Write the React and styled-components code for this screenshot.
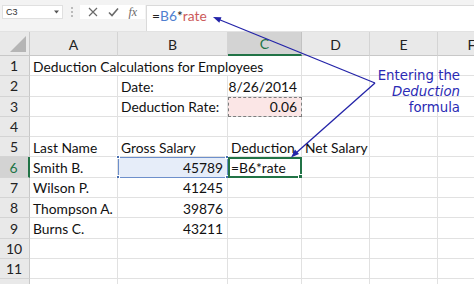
import React from 'react';
import styled, { createGlobalStyle, css } from 'styled-components';

const Global = createGlobalStyle`
  html, body { margin: 0; padding: 0; background: #fff; overflow: hidden; }
  body { width: 474px; height: 284px; }
`;

const Page = styled.div`
  position: relative;
  width: 474px;
  height: 284px;
  overflow: hidden;
  background: #fff;
  font-family: Lato, "Open Sans", sans-serif;
`;

const TopBar = styled.div`
  display: flex;
  align-items: flex-start;
  height: 32px;
  box-sizing: border-box;
  padding: 5px 0 0 2px;
  background: #f3f3f3;
  border-bottom: 1px solid #e2e2e2;
`;

const NameBox = styled.div`
  width: 61px;
  height: 14px;
  box-sizing: border-box;
  background: #fff;
  border: 1px solid #e0e0e0;
  display: flex;
  align-items: center;
  justify-content: space-between;
  padding: 0 3px 0 3px;
  font: 9px "Liberation Sans", Arial, sans-serif;
  color: #333;
`;

const Grip = styled.div`
  width: 17px;
  height: 14px;
  display: flex;
  flex-direction: column;
  align-items: center;
  justify-content: center;
  gap: 2px;
`;

const Dot = styled.span`
  width: 2px;
  height: 2px;
  border-radius: 50%;
  background: #a8a8a8;
`;

const FxButtons = styled.div`
  width: 65px;
  height: 14px;
  background: #fff;
  display: flex;
  align-items: center;
  justify-content: space-around;
  padding: 0 3px;
  box-sizing: border-box;
  color: #6a6a6a;
`;

const FxText = styled.span`
  font: italic 12px "Liberation Serif", serif;
  color: #6a6a6a;
  line-height: 14px;
`;

const FormulaBox = styled.div`
  flex: 1;
  height: 26px;
  margin-left: 1px;
  background: #fff;
  box-sizing: border-box;
  border-left: 1px solid #dadada;
  border-top: 1px solid #dadada;
  padding-left: 5px;
  font-size: 13.8px;
  line-height: 19px;
  color: #222;
  white-space: nowrap;
`;

const Ref = styled.span`
  color: ${p => p.$c};
`;

const Sheet = styled.div`
  display: grid;
  grid-template-columns: 30px 88px 110px 74px 68px 68px 68px;
  grid-template-rows: 24px repeat(12, 20.3px);
`;

const Corner = styled.div`
  background: #e9e9e9;
  border-right: 1px solid #c8c8c8;
  border-bottom: 1px solid #c8c8c8;
  box-sizing: border-box;
  position: relative;
`;

const CornerTri = styled.div`
  position: absolute;
  right: 3px;
  bottom: 3px;
  width: 0;
  height: 0;
  border-left: 16px solid transparent;
  border-bottom: 16px solid #b5b5b5;
`;

const ColHead = styled.div`
  display: flex;
  align-items: center;
  justify-content: center;
  box-sizing: border-box;
  background: ${p => (p.$sel ? '#d3d3d3' : '#e9e9e9')};
  color: ${p => (p.$sel ? '#217346' : '#222')};
  border-right: 1px solid ${p => (p.$sel ? '#c2c2c2' : '#d4d4d4')};
  border-bottom: ${p => (p.$sel ? '2px solid #217346' : '1px solid #c8c8c8')};
  font-size: 14px;
  padding-top: 1px;
`;

const RowHead = styled.div`
  display: flex;
  align-items: center;
  justify-content: center;
  box-sizing: border-box;
  background: ${p => (p.$sel ? '#d3d3d3' : '#e9e9e9')};
  color: ${p => (p.$sel ? '#217346' : '#222')};
  border-right: ${p => (p.$sel ? '2px solid #217346' : '1px solid #c8c8c8')};
  border-bottom: 1px solid #d4d4d4;
  font-size: 14px;
  padding-right: 1px;
`;

const variants = {
  ref: css`
    background: #fbe6e6;
    outline: 1px dashed #7d7d7d;
    outline-offset: -1px;
  `,
  range: css`
    background: #e6edf9;
    outline: 1px solid #6d8fcb;
    outline-offset: -1px;
  `,
  active: css`
    outline: 2px solid #217346;
    outline-offset: -2px;
  `,
};

const Cell = styled.div`
  position: relative;
  grid-column: span ${p => p.$span || 1};
  display: flex;
  align-items: center;
  justify-content: ${p => (p.$right ? 'flex-end' : 'flex-start')};
  box-sizing: border-box;
  padding: 1px 4px 0 3px;
  border-right: 1px solid #e1e1e1;
  border-bottom: 1px solid #e1e1e1;
  font-size: 13.8px;
  color: #111;
  white-space: nowrap;
  overflow: visible;
  ${p => p.$variant && variants[p.$variant]}
`;

const Handle = styled.span`
  position: absolute;
  width: ${p => p.$size}px;
  height: ${p => p.$size}px;
  background: ${p => p.$color};
  border: 1px solid #fff;
  box-sizing: content-box;
  ${p => (p.$top ? 'top: -2px;' : 'bottom: -2px;')}
  ${p => (p.$left ? 'left: -2px;' : 'right: -2px;')}
`;

const Overlay = styled.svg`
  position: absolute;
  left: 0;
  top: 0;
  pointer-events: none;
`;

const Note = styled.div`
  position: absolute;
  right: 14px;
  top: 68px;
  text-align: right;
  font: 13.3px/16px "DejaVu Sans", Verdana, sans-serif;
  color: #2a2ab4;
`;

const Em = styled.em`
  font-style: italic;
`;

const cols = ['A', 'B', 'C', 'D', 'E', 'F'];

const rows = [
  [{ t: 'Deduction Calculations for Employees', span: 3 }, {}, {}, {}],
  [{}, { t: 'Date:' }, { t: '8/26/2014', r: true }, {}, {}, {}],
  [{}, { t: 'Deduction Rate:' }, { t: '0.06', r: true, v: 'ref' }, {}, {}, {}],
  [{}, {}, {}, {}, {}, {}],
  [{ t: 'Last Name' }, { t: 'Gross Salary' }, { t: 'Deduction' }, { t: 'Net Salary' }, {}, {}],
  [{ t: 'Smith B.' }, { t: '45789', r: true, v: 'range' }, { t: '=B6*rate', v: 'active' }, {}, {}, {}],
  [{ t: 'Wilson P.' }, { t: '41245', r: true }, {}, {}, {}, {}],
  [{ t: 'Thompson A.' }, { t: '39876', r: true }, {}, {}, {}, {}],
  [{ t: 'Burns C.' }, { t: '43211', r: true }, {}, {}, {}, {}],
  [{}, {}, {}, {}, {}, {}],
  [{}, {}, {}, {}, {}, {}],
  [{}, {}, {}, {}, {}, {}],
];

function Arrow() {
  return (
    <Overlay width="474" height="284" viewBox="0 0 474 284">
      <g stroke="#2323a8" strokeWidth="1.3" fill="none">
        <line x1="375" y1="83" x2="219" y2="19.5" />
        <line x1="375" y1="83" x2="296" y2="153" />
      </g>
      <g fill="#2323a8">
        <polygon points="213,17 221.5,17.2 219.3,22.8" />
        <polygon points="291,157.5 299,154 295,149.5" />
      </g>
    </Overlay>
  );
}

export default function App() {
  return (
    <Page>
      <Global />
      <TopBar>
        <NameBox>
          <span>C3</span>
          <svg width="5" height="4" viewBox="0 0 5 4">
            <polygon points="0,0.5 5,0.5 2.5,3.5" fill="#555" />
          </svg>
        </NameBox>
        <Grip>
          <Dot />
          <Dot />
          <Dot />
        </Grip>
        <FxButtons>
          <svg width="10" height="10" viewBox="0 0 10 10">
            <path d="M1 1 L9 9 M9 1 L1 9" stroke="#6a6a6a" strokeWidth="1.2" />
          </svg>
          <svg width="11" height="10" viewBox="0 0 11 10">
            <path d="M1 5.5 L4 8.5 L10 1.5" stroke="#6a6a6a" strokeWidth="1.6" fill="none" />
          </svg>
          <FxText>fx</FxText>
        </FxButtons>
        <FormulaBox>
          =<Ref $c="#4f7fd0">B6</Ref>*<Ref $c="#cc5a5a">rate</Ref>
        </FormulaBox>
      </TopBar>
      <Sheet>
        <Corner>
          <CornerTri />
        </Corner>
        {cols.map(c => (
          <ColHead key={c} $sel={c === 'C'}>{c}</ColHead>
        ))}
        {rows.map((row, ri) => (
          <React.Fragment key={ri}>
            <RowHead $sel={ri === 5}>{ri + 1}</RowHead>
            {row.map((cell, ci) => (
              <Cell key={ci} $span={cell.span} $right={cell.r} $variant={cell.v}>
                {cell.t}
                {cell.v === 'range' && (
                  <>
                    <Handle $size={2} $color="#4a6fb0" $top $left />
                    <Handle $size={2} $color="#4a6fb0" $top />
                    <Handle $size={2} $color="#4a6fb0" $left />
                    <Handle $size={2} $color="#4a6fb0" />
                  </>
                )}
                {cell.v === 'active' && <Handle $size={3} $color="#217346" />}
              </Cell>
            ))}
          </React.Fragment>
        ))}
      </Sheet>
      <Note>
        Entering the
        <br />
        <Em>Deduction</Em>
        <br />
        formula
      </Note>
      <Arrow />
    </Page>
  );
}
